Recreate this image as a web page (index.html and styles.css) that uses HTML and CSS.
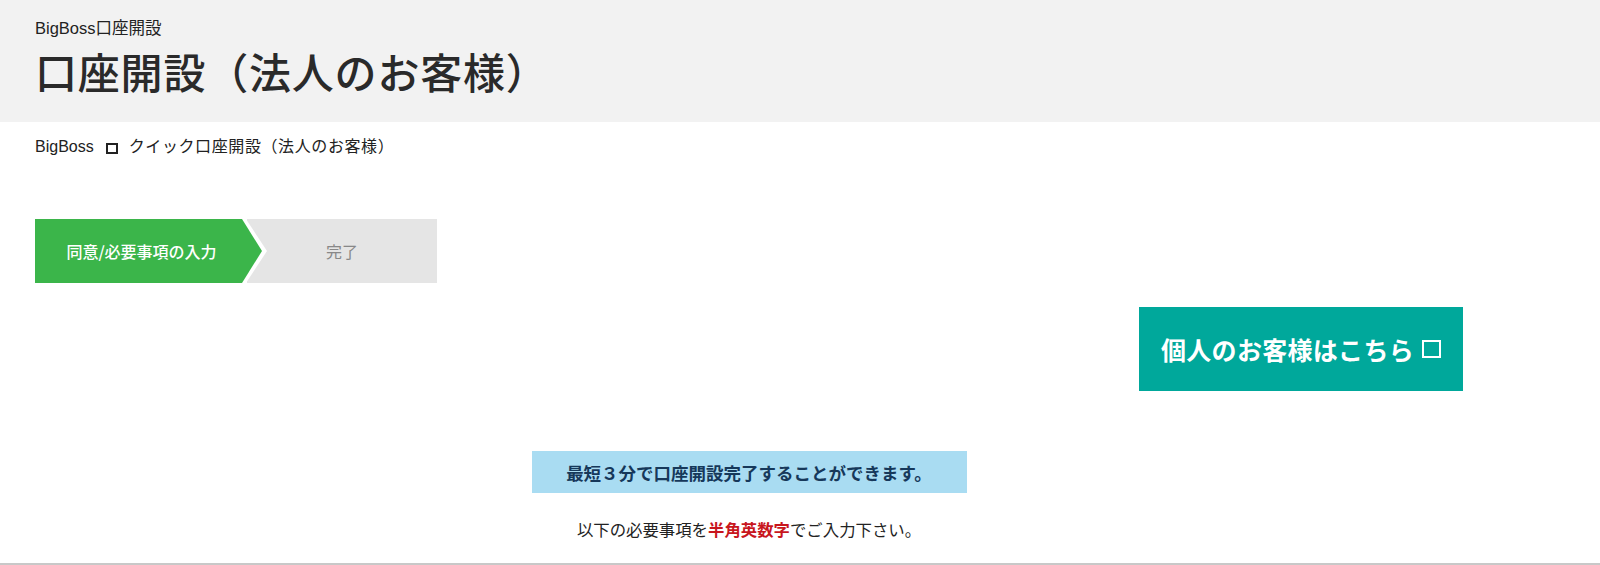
FILE: index.html
```html
<!DOCTYPE html>
<html lang="ja">
<head>
<meta charset="utf-8">
<title>口座開設（法人のお客様）</title>
<link rel="stylesheet" href="styles.css">
</head>
<body>
<header class="page-header">
  <div class="header-sub">BigBoss口座開設</div>
  <h1 class="header-title">口座開設（法人のお客様）</h1>
</header>
<main class="main">
  <nav class="breadcrumb">BigBoss<span class="tofu tofu-small"></span><span class="crumb-current">クイック口座開設（法人のお客様）</span></nav>
  <ol class="steps">
    <li class="step step-active">同意/必要事項の入力</li>
    <li class="step step-next">完了</li>
  </ol>
  <div class="btn-row">
    <a class="btn-personal" href="#">個人のお客様はこちら<span class="tofu tofu-large"></span></a>
  </div>
  <div class="banner">最短３分で口座開設完了することができます。</div>
  <p class="note">以下の必要事項を<strong class="em-red">半角英数字</strong>でご入力下さい。</p>
</main>
<div class="bottom-rule"></div>
</body>
</html>
```
FILE: styles.css
```css
html, body {
  margin: 0;
  padding: 0;
  background: #fff;
}
body {
  font-family: "Liberation Sans", "Noto Sans CJK JP", sans-serif;
  color: #222;
}
.page-header {
  background: #f2f2f2;
  height: 122px;
  box-sizing: border-box;
  padding: 17px 35px 0;
}
.header-sub {
  font-size: 16.5px;
  line-height: 22px;
  color: #222;
}
.header-title {
  margin: 8px 0 0;
  font-size: 42px;
  line-height: 56px;
  font-weight: 500;
  color: #2a2a2a;
  letter-spacing: 0.8px;
}
.main {
  width: 1463px;
  box-sizing: border-box;
  padding-left: 35px;
}
.breadcrumb {
  margin-top: 14px;
  font-size: 16px;
  line-height: 22px;
  color: #222;
  display: flex;
  align-items: center;
}
.crumb-current {
  letter-spacing: 0.6px;
}
.tofu {
  display: inline-block;
  box-sizing: border-box;
}
.tofu-small {
  width: 12px;
  height: 11px;
  border: 2px solid #222;
  margin: 3px 11px 0 12px;
}
.steps {
  list-style: none;
  margin: 61px 0 0;
  padding: 0;
  display: flex;
  gap: 5px;
}
.step {
  height: 64px;
  display: flex;
  align-items: center;
  justify-content: center;
  font-size: 16px;
  font-family: "Noto Sans CJK JP", sans-serif;
}
.step-active {
  position: relative;
  z-index: 1;
  width: 207px;
  background: #3bb54a;
  color: #fff;
  font-weight: 500;
  padding-left: 6px;
  box-sizing: border-box;
}
.step-active::before,
.step-active::after {
  content: "";
  position: absolute;
  left: 100%;
  width: 0;
  height: 0;
  border-style: solid;
  border-color: transparent;
}
.step-active::before {
  top: -6px;
  border-width: 38px 0 38px 25px;
  border-left-color: #fff;
}
.step-active::after {
  top: 0;
  border-width: 32px 0 32px 20px;
  border-left-color: #3bb54a;
}
.step-next {
  width: 190px;
  background: #e5e5e5;
  color: #888;
}
.btn-row {
  display: flex;
  justify-content: flex-end;
  margin-top: 24px;
}
.btn-personal {
  width: 324px;
  height: 84px;
  background: #00a89b;
  color: #fff;
  text-decoration: none;
  display: flex;
  align-items: center;
  justify-content: center;
  font-family: "Noto Sans CJK JP", sans-serif;
  font-size: 25px;
  font-weight: 700;
  letter-spacing: 0.3px;
}
.tofu-large {
  width: 19px;
  height: 18px;
  border: 2.5px solid #fff;
  margin-left: 8px;
}
.banner {
  width: 435px;
  height: 42px;
  margin: 60px auto 0;
  background: #a9dcf2;
  color: #16385a;
  font-family: "Noto Sans CJK JP", sans-serif;
  font-size: 17.5px;
  font-weight: 700;
  display: flex;
  align-items: center;
  justify-content: center;
}
.note {
  margin: 25px 0 0;
  text-align: center;
  font-family: "Noto Sans CJK JP", sans-serif;
  font-size: 16.4px;
  line-height: 22px;
  color: #222;
}
.em-red {
  color: #c8161d;
  font-weight: 700;
}
.bottom-rule {
  margin-top: 23px;
  height: 2px;
  background: #c8c8c8;
}
```
